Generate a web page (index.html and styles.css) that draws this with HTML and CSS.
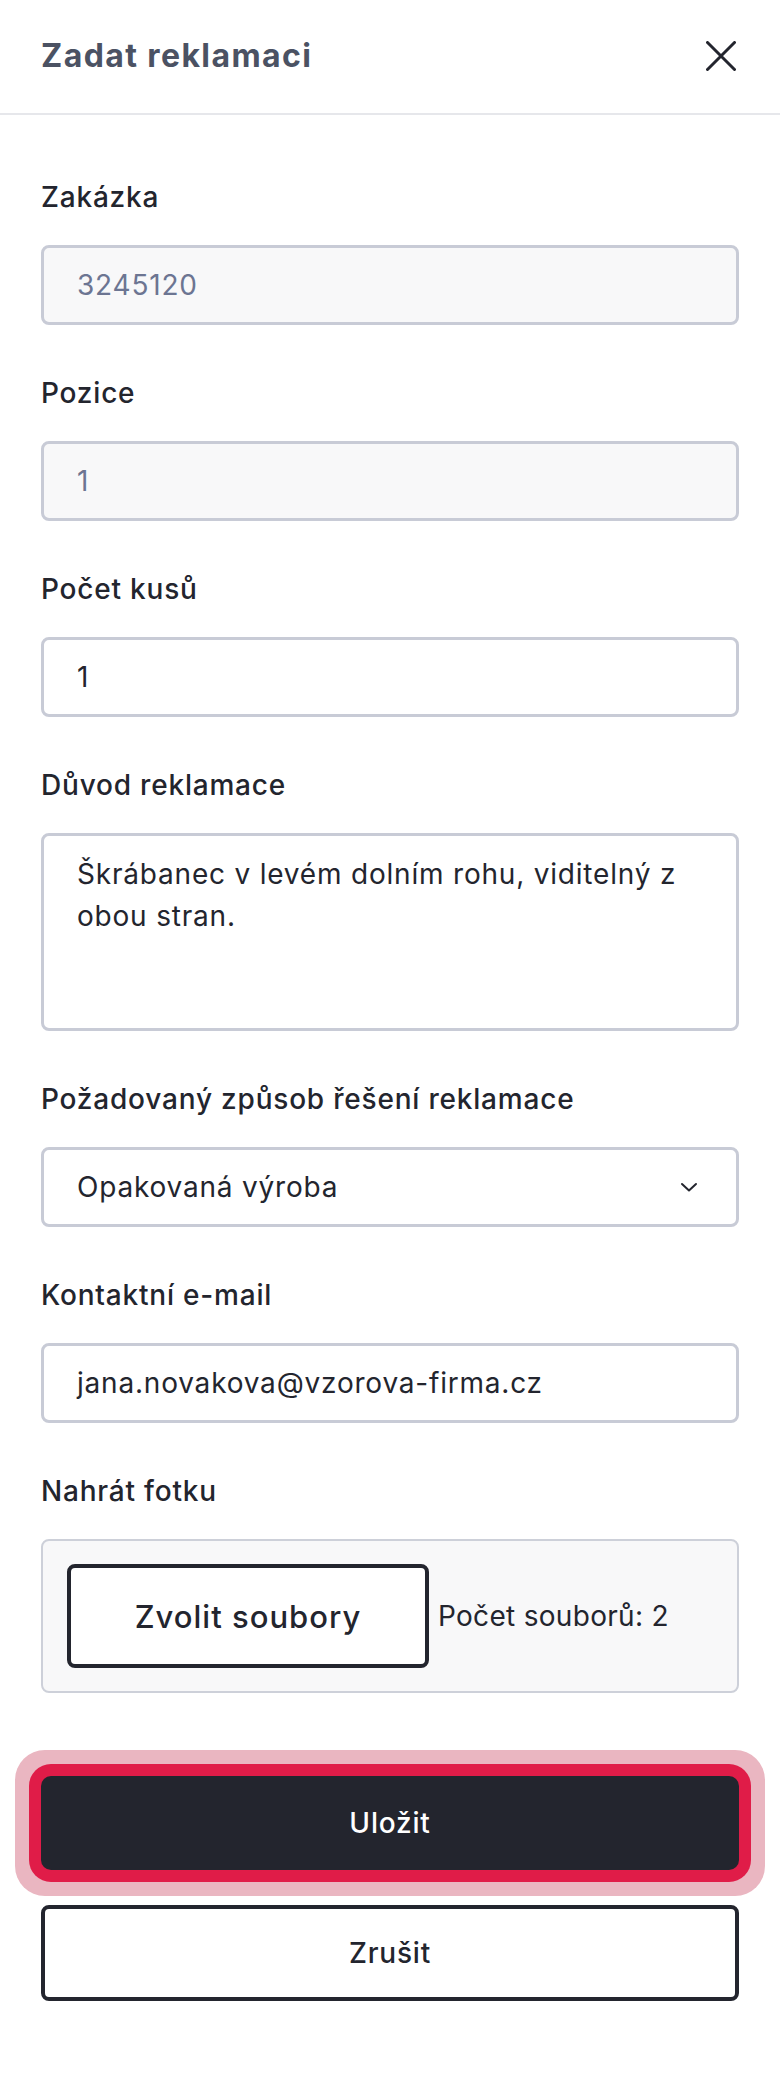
FILE: index.html
```html
<!DOCTYPE html>
<html lang="cs">
<head>
<meta charset="utf-8">
<title>Zadat reklamaci</title>
<link rel="stylesheet" href="styles.css">
</head>
<body>
<header class="header">
  <h1 class="title">Zadat reklamaci</h1>
  <button class="close" type="button" aria-label="Zavřít">
    <svg width="30" height="30" viewBox="0 0 30 30" fill="none" stroke="#23252e" stroke-width="3" stroke-linecap="round"><path d="M1.5 1.5 L28.5 28.5 M28.5 1.5 L1.5 28.5"/></svg>
  </button>
</header>
<main class="form">
  <div class="field">
    <label class="label">Zakázka</label>
    <div class="control control--disabled">3245120</div>
  </div>
  <div class="field">
    <label class="label">Pozice</label>
    <div class="control control--disabled">1</div>
  </div>
  <div class="field">
    <label class="label">Počet kusů</label>
    <div class="control">1</div>
  </div>
  <div class="field">
    <label class="label">Důvod reklamace</label>
    <div class="control control--area">Škrábanec v levém dolním rohu, viditelný z obou stran.</div>
  </div>
  <div class="field">
    <label class="label">Požadovaný způsob řešení reklamace</label>
    <div class="control control--select">
      <span>Opakovaná výroba</span>
      <svg class="chevron" width="18" height="10" viewBox="0 0 18 10" fill="none" stroke="#23252e" stroke-width="2" stroke-linecap="round" stroke-linejoin="round"><path d="M2 2 L9 8.5 L16 2"/></svg>
    </div>
  </div>
  <div class="field">
    <label class="label">Kontaktní e-mail</label>
    <div class="control">jana.novakova@vzorova-firma.cz</div>
  </div>
  <div class="field">
    <label class="label">Nahrát fotku</label>
    <div class="upload">
      <button class="upload-btn" type="button">Zvolit soubory</button>
      <span class="upload-info">Počet souborů: 2</span>
    </div>
  </div>
  <div class="actions">
    <button class="btn btn--primary" type="button">Uložit</button>
    <button class="btn btn--secondary" type="button">Zrušit</button>
  </div>
</main>
</body>
</html>
```
FILE: styles.css
```css
* { box-sizing: border-box; }
html, body {
  margin: 0;
  padding: 0;
  background: #ffffff;
}
body {
  font-family: "Inter", "Open Sans", "Liberation Sans", sans-serif;
  color: #23252e;
  width: 780px;
  min-height: 2082px;
  letter-spacing: 0.8px;
}
.header {
  height: 115px;
  border-bottom: 2px solid #e6e7eb;
  display: flex;
  align-items: center;
  justify-content: space-between;
  padding: 0 44px 2px 41px;
}
.title {
  margin: 0;
  font-size: 32px;
  font-weight: 700;
  color: #4b5263;
  letter-spacing: 1.4px;
}
.close {
  border: 0;
  background: none;
  padding: 0;
  width: 30px;
  height: 30px;
  display: flex;
  align-items: center;
  justify-content: center;
}
.form {
  padding: 62px 41px 0 41px;
  display: flex;
  flex-direction: column;
  gap: 48px;
}
.field {
  display: flex;
  flex-direction: column;
  gap: 28px;
}
.label {
  font-size: 28px;
  line-height: 40px;
  height: 40px;
  font-weight: 500;
  color: #23252e;
}
.control {
  height: 80px;
  border: 3px solid #c8cbd6;
  border-radius: 8px;
  background: #ffffff;
  padding: 0 33px;
  display: flex;
  align-items: center;
  font-size: 28px;
  color: #23252e;
}
.control--disabled {
  background: #f8f8f9;
  color: #6c7592;
}
.control--area {
  height: 198px;
  align-items: flex-start;
  padding: 17px 33px;
  line-height: 42px;
}
.control--select {
  justify-content: space-between;
  padding-right: 38px;
}
.chevron { display: block; }
.upload {
  height: 154px;
  border: 2px solid #cdd0d9;
  border-radius: 8px;
  background: #f8f8f9;
  display: flex;
  align-items: center;
  padding: 0 24px;
  gap: 9px;
}
.upload-btn {
  width: 362px;
  height: 104px;
  border: 4px solid #23252e;
  border-radius: 8px;
  background: #ffffff;
  font-family: inherit;
  font-size: 31px;
  font-weight: 500;
  letter-spacing: 1px;
  color: #23252e;
}
.upload-info {
  font-size: 28px;
  letter-spacing: 0.3px;
  color: #23252e;
}
.actions {
  margin-top: 35px;
  display: flex;
  flex-direction: column;
  gap: 35px;
}
.btn {
  width: 100%;
  font-family: inherit;
  font-size: 28px;
  font-weight: 500;
  letter-spacing: 0.8px;
  border-radius: 8px;
}
.btn--primary {
  height: 94px;
  background: #23252e;
  color: #ffffff;
  border: 0;
  box-shadow: 0 0 0 12px #e01c48, 0 0 0 26px #eab6c1;
  border-radius: 10px;
}
.btn--secondary {
  height: 96px;
  background: #ffffff;
  color: #23252e;
  border: 4px solid #23252e;
}
```
